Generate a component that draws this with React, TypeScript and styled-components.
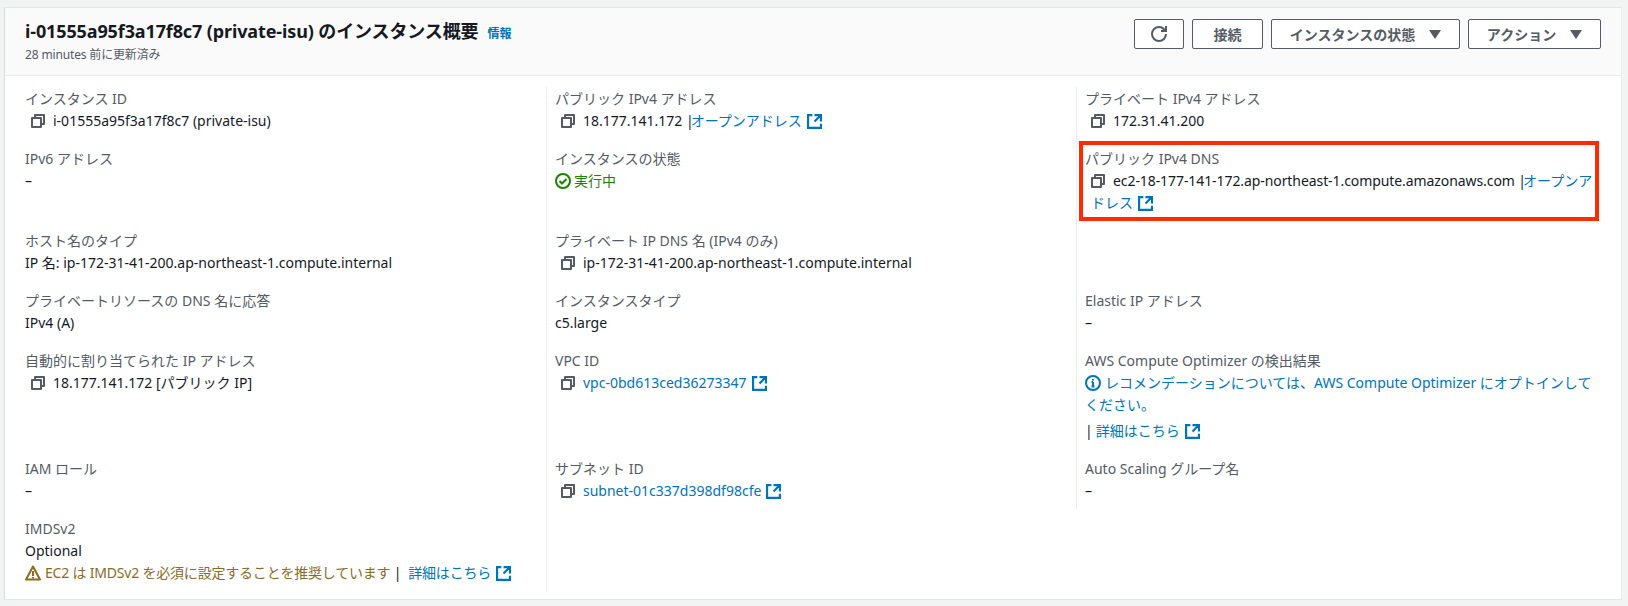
import { FunctionComponent, ReactNode } from "react"
import styled, { createGlobalStyle } from "styled-components"

const GlobalStyle = createGlobalStyle`
    html, body{
        margin: 0;
        padding: 0;
        background: #f2f3f3;
    }

    body{
        font-family: "Noto Sans", "Noto Sans CJK JP", sans-serif;
        font-size: 14px;
        line-height: 22px;
        color: #16191f;
    }
`

const Page = styled.div`
    width: 1628px;
    height: 606px;
    padding: 8px 6px 0 4px;
    box-sizing: border-box;
    overflow: hidden;
`

const Card = styled.section`
    background: #fff;
    border-left: 1px solid #d5dbdb;
    border-right: 1px solid #eaeded;
    box-shadow: 0 -1px 0 #e4e7e7, 0 1px 0 #e4e7e7;
    height: 591px;
`

const Header = styled.header`
    display: flex;
    justify-content: space-between;
    align-items: flex-start;
    box-sizing: border-box;
    height: 68px;
    padding: 10px 20px 0 20px;
    background: #fafafa;
    border-bottom: 1px solid #eaeded;
`

const TitleRow = styled.div`
    display: flex;
    align-items: baseline;
    gap: 9px;
`

const Title = styled.h2`
    margin: 0;
    font-size: 18px;
    line-height: 26px;
    font-weight: 700;
    letter-spacing: -0.12px;
    color: #16191f;
`

const InfoLink = styled.a`
    font-size: 12px;
    font-weight: 700;
    color: #0073bb;
`

const Updated = styled.div`
    font-size: 12px;
    line-height: 18px;
    margin-top: 1px;
    letter-spacing: -0.15px;
    color: #545b64;
`

const Actions = styled.div`
    display: flex;
    gap: 8px;
    padding-top: 1px;
`

const Button = styled.button<{ $width: number }>`
    display: flex;
    align-items: center;
    justify-content: center;
    gap: 14px;
    width: ${p => p.$width}px;
    height: 30px;
    padding: 0;
    background: #fff;
    border: 1px solid #545b64;
    border-radius: 2px;
    color: #545b64;
    font-family: inherit;
    font-size: 14px;
    font-weight: 700;
`

const Caret = styled.span`
    width: 0;
    height: 0;
    border-left: 6px solid transparent;
    border-right: 6px solid transparent;
    border-top: 9px solid #545b64;
`

const Grid = styled.div`
    display: grid;
    grid-template-columns: 541px 530px 1fr;
    padding-top: 11px;
`

const Cell = styled.div<{ $divider?: boolean, $trim?: number, $pad?: number }>`
    position: relative;
    padding: 0 20px ${p => p.$pad ?? 15}px ${p => (p.$divider ? "9px" : "20px")};

    &::before{
        content: "";
        display: ${p => (p.$divider ? "block" : "none")};
        position: absolute;
        left: 0;
        top: 0;
        bottom: ${p => p.$trim ?? 0}px;
        width: 1px;
        background: #eaeded;
    }
`

const Label = styled.div`
    line-height: 23px;
    color: #545b64;
`

const Value = styled.div`
    color: #16191f;
`

const Copyable = styled.div`
    padding-left: 6px;
    color: #16191f;
`

const DnsName = styled.span`
    letter-spacing: -0.08px;
`

const CopyIcon = styled.svg`
    width: 14px;
    height: 14px;
    margin-right: 8px;
    vertical-align: -2px;
    fill: none;
    stroke: #545b64;
    stroke-width: 2;
`

const Link = styled.a<{ $flush?: boolean }>`
    margin-left: ${p => (p.$flush ? "-3px" : "0")};
    color: #0073bb;
`

const ExternalIcon = styled.svg`
    width: 15px;
    height: 15px;
    margin-left: 5px;
    vertical-align: -3px;
    fill: none;
    stroke: #0073bb;
    stroke-width: 2;
`

const Running = styled.div`
    display: flex;
    align-items: center;
    gap: 3px;
    color: #1d8102;
`

const Warning = styled.div`
    white-space: nowrap;
    letter-spacing: -0.2px;
    color: #8a6b1f;
`

const StatusIcon = styled.svg`
    width: 16px;
    height: 16px;
    fill: none;
    stroke: currentColor;
    stroke-width: 2;
`

const InlineIcon = styled(StatusIcon)`
    margin-right: 4px;
    vertical-align: -3px;
`

const Separator = styled.span`
    color: #16191f;
`

const DetailRow = styled.div`
    margin-top: 4px;

    a{
        margin-left: 3px;
    }
`

const Highlight = styled.div`
    position: absolute;
    top: -6px;
    left: 3px;
    right: 22px;
    bottom: 8px;
    border: 4px solid #ff2a00;
    pointer-events: none;
`

const Copy:FunctionComponent = ()=>(
    <CopyIcon viewBox="1 1 14 14">
        <path d="M2 5h9v9H2z" strokeLinejoin="round"/>
        <path d="M5 5V2h9v9h-3" strokeLinejoin="round"/>
    </CopyIcon>
)

const External:FunctionComponent = ()=>(
    <ExternalIcon viewBox="1 1 14 14">
        <path d="M14 8.01v-6H8M14.02 2 8 8.02M6 2.01H2v12h12V10"/>
    </ExternalIcon>
)

const Field:FunctionComponent<{ label:string, divider?:boolean, trim?:number, pad?:number, children?:ReactNode }> = ({ label, divider, trim, pad, children })=>(
    <Cell $divider={divider} $trim={trim} $pad={pad}>
        <Label>{label}</Label>
        {children}
    </Cell>
)

const App:FunctionComponent = ()=>{
    return(
        <Page>
            <GlobalStyle/>
            <Card>
                <Header>
                    <div>
                        <TitleRow>
                            <Title>i-01555a95f3a17f8c7 (private-isu) のインスタンス概要</Title>
                            <InfoLink>情報</InfoLink>
                        </TitleRow>
                        <Updated>28 minutes 前に更新済み</Updated>
                    </div>
                    <Actions>
                        <Button $width={50}>
                            <StatusIcon viewBox="0 0 16 16">
                                <path d="M10 5h5V0"/>
                                <path d="M15 8a6.99 6.99 0 0 1-7 7 6.99 6.99 0 0 1-7-7 6.99 6.99 0 0 1 7-7c2.8 0 5 1.8 6.3 4"/>
                            </StatusIcon>
                        </Button>
                        <Button $width={71}>接続</Button>
                        <Button $width={189}>インスタンスの状態<Caret/></Button>
                        <Button $width={133}>アクション<Caret/></Button>
                    </Actions>
                </Header>
                <Grid>
                    <Field label="インスタンス ID">
                        <Copyable><Copy/>i-01555a95f3a17f8c7 (private-isu)</Copyable>
                    </Field>
                    <Field label="パブリック IPv4 アドレス" divider>
                        <Copyable><Copy/>18.177.141.172 |<Link $flush>オープンアドレス<External/></Link></Copyable>
                    </Field>
                    <Field label="プライベート IPv4 アドレス" divider>
                        <Copyable><Copy/>172.31.41.200</Copyable>
                    </Field>

                    <Field label="IPv6 アドレス"><Value>–</Value></Field>
                    <Field label="インスタンスの状態" divider>
                        <Running>
                            <StatusIcon viewBox="0 0 16 16">
                                <circle cx="8" cy="8" r="7"/>
                                <path d="m4.5 8 2.5 2.5 4.5-4.5"/>
                            </StatusIcon>
                            実行中
                        </Running>
                    </Field>
                    <Field label="パブリック IPv4 DNS" divider>
                        <Copyable>
                            <Copy/><DnsName>ec2-18-177-141-172.ap-northeast-1.compute.amazonaws.com |</DnsName><Link $flush>オープンアドレス<External/></Link>
                        </Copyable>
                        <Highlight/>
                    </Field>

                    <Field label="ホスト名のタイプ"><Value>IP 名: ip-172-31-41-200.ap-northeast-1.compute.internal</Value></Field>
                    <Field label="プライベート IP DNS 名 (IPv4 のみ)" divider>
                        <Copyable><Copy/>ip-172-31-41-200.ap-northeast-1.compute.internal</Copyable>
                    </Field>
                    <Cell $divider/>

                    <Field label="プライベートリソースの DNS 名に応答"><Value>IPv4 (A)</Value></Field>
                    <Field label="インスタンスタイプ" divider><Value>c5.large</Value></Field>
                    <Field label="Elastic IP アドレス" divider><Value>–</Value></Field>

                    <Field label="自動的に割り当てられた IP アドレス">
                        <Copyable><Copy/>18.177.141.172 [パブリック IP]</Copyable>
                    </Field>
                    <Field label="VPC ID" divider>
                        <Copyable><Copy/><Link>vpc-0bd613ced36273347<External/></Link></Copyable>
                    </Field>
                    <Field label="AWS Compute Optimizer の検出結果" divider>
                        <Link>
                            <InlineIcon viewBox="0 0 16 16">
                                <circle cx="8" cy="8" r="7"/>
                                <path d="M8 11V7M6.5 7H8M6.5 11.5h3"/>
                                <path d="M8 4v1.6"/>
                            </InlineIcon>
                            レコメンデーションについては、AWS Compute Optimizer にオプトインして<br/>ください。
                        </Link>
                        <DetailRow><Separator>|</Separator><Link>詳細はこちら<External/></Link></DetailRow>
                    </Field>

                    <Field label="IAM ロール"><Value>–</Value></Field>
                    <Field label="サブネット ID" divider>
                        <Copyable><Copy/><Link>subnet-01c337d398df98cfe<External/></Link></Copyable>
                    </Field>
                    <Field label="Auto Scaling グループ名" divider trim={8}><Value>–</Value></Field>

                    <Field label="IMDSv2" pad={8}>
                        <Value>Optional</Value>
                        <Warning>
                            <InlineIcon viewBox="0 0 16 16">
                                <path d="M8 1.5 1 14.5h14z" strokeLinejoin="round"/>
                                <path d="M8 6v5M8 12v1.5"/>
                            </InlineIcon>
                            EC2 は IMDSv2 を必須に設定することを推奨しています<Separator> |&nbsp;&nbsp;</Separator>
                            <Link>詳細はこちら<External/></Link>
                        </Warning>
                    </Field>
                    <Cell $divider/>
                </Grid>
            </Card>
        </Page>
    )
}

export default App
